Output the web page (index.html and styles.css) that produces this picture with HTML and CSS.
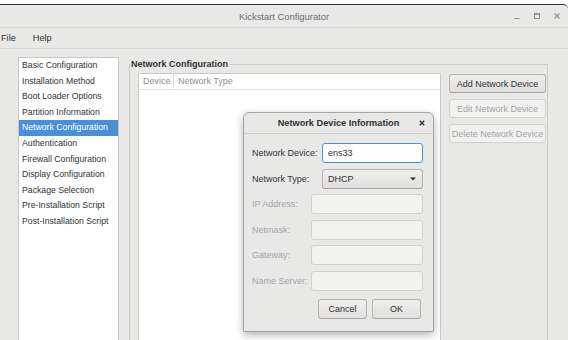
FILE: index.html
```html
<!DOCTYPE html>
<html lang="en">
<head>
    <meta charset="UTF-8">
    <title>Kickstart Configurator</title>
    <link rel="stylesheet" href="styles.css">
</head>
<body>
    <div class="window">
        <div class="titlebar">
            <span></span>
            <span class="title">Kickstart Configurator</span>
            <div class="controls">
                <span class="ctl"><svg width="8" height="8" viewBox="0 0 8 8"><path d="M1.5 6.5h5" stroke="#8b8e8f" stroke-width="1.2"/></svg></span>
                <span class="ctl"><svg width="8" height="8" viewBox="0 0 8 8"><rect x="1.5" y="1.5" width="5" height="5" fill="none" stroke="#8b8e8f" stroke-width="1"/><path d="M1.5 2h5" stroke="#8b8e8f" stroke-width="1.5"/></svg></span>
                <span class="ctl"><svg width="8" height="8" viewBox="0 0 8 8"><path d="M1.5 1.5l5 5M6.5 1.5l-5 5" stroke="#8b8e8f" stroke-width="1.1"/></svg></span>
            </div>
        </div>

        <div class="menubar">
            <span class="menu-item">File</span>
            <span class="menu-item">Help</span>
        </div>

        <div class="content">
            <ul class="sidebar">
                <li>Basic Configuration</li>
                <li>Installation Method</li>
                <li>Boot Loader Options</li>
                <li>Partition Information</li>
                <li class="selected">Network Configuration</li>
                <li>Authentication</li>
                <li>Firewall Configuration</li>
                <li>Display Configuration</li>
                <li>Package Selection</li>
                <li>Pre-Installation Script</li>
                <li>Post-Installation Script</li>
            </ul>

            <fieldset class="frame">
                <legend>Network Configuration</legend>
                <div class="frame-body">
                    <div class="tree">
                        <div class="tree-head">
                            <span class="col col-device">Device</span>
                            <span class="col">Network Type</span>
                        </div>
                    </div>
                    <div class="actions">
                        <button class="btn">Add Network Device</button>
                        <button class="btn" disabled>Edit Network Device</button>
                        <button class="btn" disabled>Delete Network Device</button>
                    </div>
                </div>
            </fieldset>
        </div>
    </div>

    <!-- Network Device Information dialog -->
    <div class="dialog">
        <div class="dialog-head">
            <span></span>
            <span class="dialog-title">Network Device Information</span>
            <span class="dialog-close"><svg width="6" height="6" viewBox="0 0 6 6"><path d="M0.8 0.8l4.4 4.4M5.2 0.8l-4.4 4.4" stroke="#2e3436" stroke-width="1.4"/></svg></span>
        </div>
        <div class="dialog-body">
            <div class="row">
                <span class="label">Network Device:</span>
                <div class="field entry">ens33</div>
            </div>
            <div class="row">
                <span class="label">Network Type:</span>
                <div class="field combo">
                    <span>DHCP</span>
                    <svg width="6" height="4" viewBox="0 0 6 4"><path d="M0 0.5h6L3 3.5z" fill="#2e3436"/></svg>
                </div>
            </div>
            <div class="row">
                <span class="label dim">IP Address:</span>
                <div class="field wide entry disabled"></div>
            </div>
            <div class="row">
                <span class="label dim">Netmask:</span>
                <div class="field wide entry disabled"></div>
            </div>
            <div class="row">
                <span class="label dim">Gateway:</span>
                <div class="field wide entry disabled"></div>
            </div>
            <div class="row">
                <span class="label dim">Name Server:</span>
                <div class="field wide entry disabled"></div>
            </div>
            <div class="dialog-buttons">
                <button class="btn">Cancel</button>
                <button class="btn">OK</button>
            </div>
        </div>
    </div>
</body>
</html>
```

FILE: styles.css
```css
body {
    margin: 0;
    background-color: #fff;
    font-family: "Liberation Sans", Arial, sans-serif;
    font-size: 9px;
    color: #2e3436;
    position: relative;
}
.window {
    margin-top: 4px;
    height: 336px;
    box-sizing: border-box;
    border-top: 1px solid #2f3537;
    border-top-right-radius: 5px;
    background-color: #e8e8e7;
    overflow: hidden;
}
.titlebar {
    height: 22px;
    display: grid;
    grid-template-columns: 1fr auto 1fr;
    align-items: center;
    border-bottom: 1px solid #d9d6d3;
}
.title {
    color: #6b6e6f;
    font-size: 9.4px;
}
.controls {
    justify-self: end;
    display: flex;
    padding-right: 1px;
}
.ctl {
    width: 20px;
    display: flex;
    justify-content: center;
}
.menubar {
    height: 20px;
    display: flex;
    align-items: center;
    gap: 17px;
    padding-left: 1px;
    border-bottom: 1px solid #d9d6d3;
    font-size: 9.2px;
}
.content {
    display: flex;
    align-items: flex-start;
    gap: 10px;
    padding: 8px 0 0 18px;
}
.sidebar {
    list-style: none;
    margin: 0;
    padding: 0;
    width: 101px;
    height: 290px;
    box-sizing: border-box;
    background-color: #fff;
    border: 1px solid #c9c5c1;
}
.sidebar li {
    height: 15.6px;
    line-height: 15.6px;
    padding-left: 3px;
    font-size: 8.7px;
    white-space: nowrap;
}
.sidebar li.selected {
    background-color: #4a90d9;
    color: #fff;
}
.frame {
    margin: 1px 0 0 0;
    padding: 0;
    width: 419px;
    min-inline-size: 0;
    box-sizing: border-box;
    border: 1px solid #cdc9c5;
}
.frame legend {
    padding: 0 1px;
    font-weight: bold;
    line-height: 12px;
}
.frame-body {
    display: flex;
    align-items: flex-start;
    gap: 8px;
    padding: 3px 1px 0 8px;
    height: 290px;
}
.tree {
    width: 303px;
    height: 280px;
    box-sizing: border-box;
    background-color: #fff;
    border: 1px solid #cdc9c5;
}
.tree-head {
    display: flex;
    height: 15px;
    line-height: 15px;
    border-bottom: 1px solid #e1dedb;
    color: #8e9192;
}
.col {
    padding-left: 4px;
}
.col-device {
    width: 35px;
    box-sizing: border-box;
    border-right: 1px solid #e1dedb;
}
.actions {
    width: 97px;
    display: flex;
    flex-direction: column;
    gap: 6px;
    margin-top: 1px;
}
.btn {
    height: 19px;
    padding: 0;
    font: inherit;
    color: #2e3436;
    white-space: nowrap;
    border: 1px solid #b6b3b0;
    border-bottom-color: #a6a3a0;
    border-radius: 3px;
    background: linear-gradient(#efefee, #e0dfdd);
}
.btn:disabled {
    color: #a3a5a6;
    background: #f1f1f0;
    border-color: #d3cfcb;
}
.dialog {
    position: absolute;
    left: 243px;
    top: 112px;
    width: 191px;
    box-sizing: border-box;
    border: 1px solid #a4a4a2;
    border-radius: 6px 6px 2px 2px;
    background-color: #e8e8e7;
    box-shadow: 0 3px 8px rgba(0,0,0,0.3);
}
.dialog-head {
    height: 20px;
    display: grid;
    grid-template-columns: 1fr auto 1fr;
    align-items: center;
    border-bottom: 1px solid #cfcdca;
}
.dialog-title {
    font-weight: bold;
    font-size: 9.2px;
}
.dialog-close {
    justify-self: end;
    display: flex;
    padding-right: 8px;
}
.dialog-body {
    display: flex;
    flex-direction: column;
    gap: 5.5px;
    padding: 9px 10px 12px 8px;
}
.row {
    height: 20px;
    display: flex;
    align-items: center;
    justify-content: space-between;
}
.label.dim {
    color: #a3a5a6;
}
.field {
    width: 101px;
    height: 20px;
    box-sizing: border-box;
    border-radius: 3px;
}
.field.wide {
    width: 112px;
}
.entry {
    background-color: #fff;
    border: 1px solid #4a90d9;
    padding-left: 5px;
    line-height: 18px;
}
.entry.disabled {
    background-color: #f2f2f1;
    border-color: #d3cfcb;
}
.combo {
    display: flex;
    align-items: center;
    justify-content: space-between;
    padding: 0 6px 0 5px;
    border: 1px solid #b6b3b0;
    border-bottom-color: #a6a3a0;
    background: linear-gradient(#efefee, #e0dfdd);
}
.dialog-buttons {
    display: flex;
    justify-content: flex-end;
    gap: 5px;
    margin-top: 3px;
    padding-right: 2px;
}
.dialog-buttons .btn {
    width: 49px;
    height: 20px;
}
```
